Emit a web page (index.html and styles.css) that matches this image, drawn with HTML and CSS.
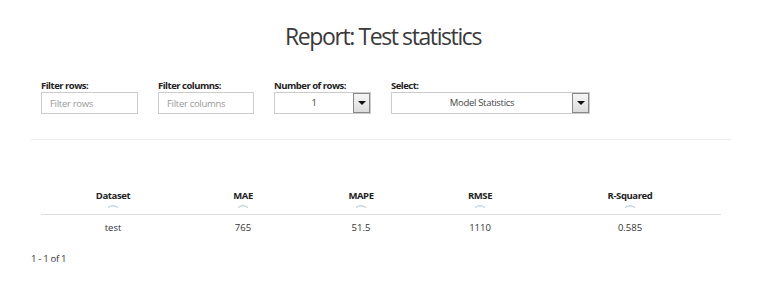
FILE: index.html
```html
<!DOCTYPE html>
<html lang="en">
<head>
    <meta charset="UTF-8" />
    <title>Report: Test statistics</title>
    <link rel="stylesheet" href="styles.css">
</head>
<body>
    <div class="page">
        <h1 class="title">Report: Test statistics</h1>

        <div class="filters">
            <div class="filter f-rows">
                <label>Filter rows:</label>
                <input type="text" placeholder="Filter rows">
            </div>
            <div class="filter f-cols">
                <label>Filter columns:</label>
                <input type="text" placeholder="Filter columns">
            </div>
            <div class="filter f-num">
                <label>Number of rows:</label>
                <div class="select">
                    <span class="select-value">1</span>
                    <span class="select-btn"><span class="tri"></span></span>
                </div>
            </div>
            <div class="filter f-sel">
                <label>Select:</label>
                <div class="select">
                    <span class="select-value">Model Statistics</span>
                    <span class="select-btn"><span class="tri"></span></span>
                </div>
            </div>
        </div>

        <div class="divider"></div>

        <div class="stats">
            <div class="stats-row stats-head">
                <div class="cell">Dataset<svg class="sort" width="12" height="4" viewBox="0 0 12 4"><path d="M1 3.5 Q6 0 11 3.5" fill="none" stroke="#a9c3d6" stroke-width="1"/></svg></div>
                <div class="cell">MAE<svg class="sort" width="12" height="4" viewBox="0 0 12 4"><path d="M1 3.5 Q6 0 11 3.5" fill="none" stroke="#a9c3d6" stroke-width="1"/></svg></div>
                <div class="cell">MAPE<svg class="sort" width="12" height="4" viewBox="0 0 12 4"><path d="M1 3.5 Q6 0 11 3.5" fill="none" stroke="#a9c3d6" stroke-width="1"/></svg></div>
                <div class="cell">RMSE<svg class="sort" width="12" height="4" viewBox="0 0 12 4"><path d="M1 3.5 Q6 0 11 3.5" fill="none" stroke="#a9c3d6" stroke-width="1"/></svg></div>
                <div class="cell">R-Squared<svg class="sort" width="12" height="4" viewBox="0 0 12 4"><path d="M1 3.5 Q6 0 11 3.5" fill="none" stroke="#a9c3d6" stroke-width="1"/></svg></div>
            </div>
            <div class="stats-row">
                <div class="cell">test</div>
                <div class="cell">765</div>
                <div class="cell">51.5</div>
                <div class="cell">1110</div>
                <div class="cell">0.585</div>
            </div>
        </div>

        <div class="pager">1 - 1 of 1</div>
    </div>
</body>
</html>
```

FILE: styles.css
```css
body {
    margin: 0;
    background: #fff;
    color: #333;
    font-family: 'Open Sans', 'Liberation Sans', sans-serif;
}

.page {
    width: 700px;
    margin-left: 31px;
    padding-top: 22px;
}

.title {
    margin: 0;
    text-align: center;
    font-size: 23px;
    font-weight: 400;
    line-height: 28px;
    letter-spacing: -1.4px;
    color: #3a3a3a;
    padding-left: 4px;
}

.filters {
    display: flex;
    gap: 20px;
    padding-left: 10px;
    margin-top: 30px;
}

.filter label {
    display: block;
    font-size: 9.5px;
    font-weight: 700;
    line-height: 12px;
    letter-spacing: -0.5px;
    color: #222;
}

.f-rows { width: 97px; }
.f-cols { width: 96px; }
.f-num { width: 97px; }
.f-sel { width: 199px; }

.filter input {
    display: block;
    box-sizing: border-box;
    width: 100%;
    height: 22px;
    margin: 0;
    padding: 0 8px;
    border: 1px solid #ccc;
    font-family: inherit;
    font-size: 9.5px;
    letter-spacing: -0.3px;
    outline: none;
}

.filter input::placeholder {
    color: #999;
}

.select {
    box-sizing: border-box;
    display: flex;
    height: 22px;
    border: 1px solid #ccc;
    font-size: 9.5px;
    letter-spacing: -0.3px;
    color: #444;
}

.select-value {
    flex: 1;
    text-align: center;
    line-height: 20px;
}

.select-btn {
    box-sizing: border-box;
    width: 17px;
    height: 20px;
    border: 1px solid #888;
    background: linear-gradient(#f6f6f6, #dcdcdc);
    display: flex;
    align-items: center;
    justify-content: center;
}

.tri {
    width: 0;
    height: 0;
    border-left: 4px solid transparent;
    border-right: 4px solid transparent;
    border-top: 4px solid #111;
}

.divider {
    height: 1px;
    background: #ebebeb;
    margin-top: 25px;
}

.stats {
    margin: 50px 10px 0;
    font-size: 9.5px;
}

.stats-row {
    display: grid;
    grid-template-columns: 144px 116px 120px 118px 1fr;
}

.stats-head {
    border-bottom: 1px solid #ddd;
    font-weight: 700;
    letter-spacing: -0.4px;
    color: #222;
}

.stats-head .cell {
    display: flex;
    flex-direction: column;
    align-items: center;
    line-height: 12px;
    padding-bottom: 6px;
}

.sort {
    display: block;
    margin-top: 2px;
}

.cell {
    text-align: center;
    line-height: 26px;
}

.pager {
    font-size: 9.5px;
    margin-top: 11px;
    letter-spacing: -0.3px;
}
```
